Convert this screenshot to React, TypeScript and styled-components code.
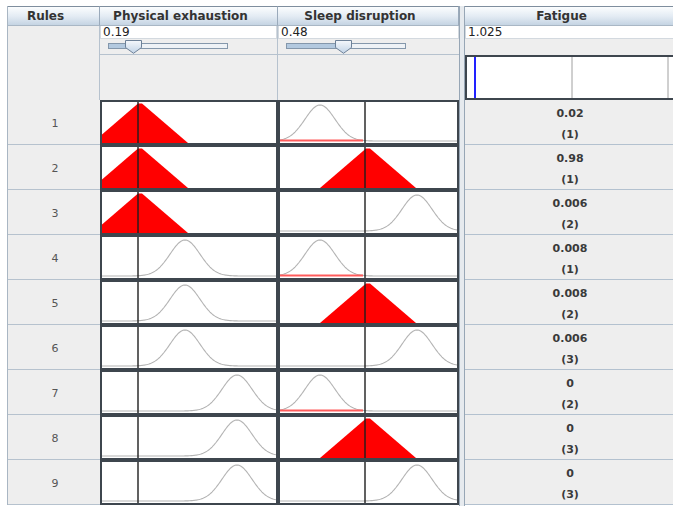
import React from "react";
import styled, { createGlobalStyle } from "styled-components";

const GlobalStyle = createGlobalStyle`
  html, body {
    margin: 0;
    padding: 0;
    background: #ffffff;
  }
  body {
    font-family: "DejaVu Sans", "Liberation Sans", sans-serif;
  }
`;

type Shape = "low" | "med" | "high";

interface Rule {
  phys: Shape;
  sleep: Shape;
  value: string;
  out: number;
}

const rules: Rule[] = [
  { phys: "low", sleep: "low", value: "0.02", out: 1 },
  { phys: "low", sleep: "med", value: "0.98", out: 1 },
  { phys: "low", sleep: "high", value: "0.006", out: 2 },
  { phys: "med", sleep: "low", value: "0.008", out: 1 },
  { phys: "med", sleep: "med", value: "0.008", out: 2 },
  { phys: "med", sleep: "high", value: "0.006", out: 3 },
  { phys: "high", sleep: "low", value: "0", out: 2 },
  { phys: "high", sleep: "med", value: "0", out: 3 },
  { phys: "high", sleep: "high", value: "0", out: 3 },
];

// centres of the membership functions, in px inside a plot cell
const physCenters: Record<Shape, number> = { low: 38, med: 83, high: 135 };
const sleepCenters: Record<Shape, number> = { low: 40, med: 88, high: 137 };

const PLOT_H = 41;

const Frame = styled.div`
  width: 673px;
  height: 506px;
  overflow: hidden;
  box-sizing: border-box;
  padding: 6px 0 0 7px;
  display: flex;
  align-items: flex-start;
`;

const InputTable = styled.div`
  display: grid;
  grid-template-columns: 92px 178px 181px;
  grid-template-rows: 20px 74px repeat(9, 45px);
  border-left: 1px solid #a9b6c3;
  background: #eeeeee;
  flex-shrink: 0;
`;

const OutputTable = styled.div`
  display: grid;
  grid-template-columns: 210px;
  grid-template-rows: 20px 74px repeat(9, 45px);
  background: #eeeeee;
  flex-shrink: 0;
`;

const Divider = styled.div`
  width: 4px;
  height: 500px;
  flex-shrink: 0;
  background: #e6eaee;
  border-left: 1px solid #97a6b5;
  border-right: 1px solid #97a6b5;
`;

const HeadCell = styled.div`
  display: flex;
  align-items: center;
  justify-content: center;
  box-sizing: border-box;
  padding-right: 16px;
  font-weight: bold;
  font-size: 12px;
  color: #333333;
  white-space: nowrap;
  background: linear-gradient(#fbfdfe, #e4ecf4 50%, #c5d4e3);
  border-top: 1px solid #7f8e9e;
  border-right: 1px solid #9aaabb;
  border-bottom: 1px solid #a9b7c5;
`;

const BlankCell = styled.div`
  border-right: 1px solid #b6c2ce;
`;

const InputCell = styled.div<{ $last?: boolean }>`
  display: flex;
  flex-direction: column;
  border-right: ${(p) => (p.$last ? "none" : "1px solid #b6c2ce")};
`;

const Field = styled.div`
  height: 13px;
  box-sizing: border-box;
  background: #ffffff;
  border: 1px solid #d3d9df;
  border-top: none;
  padding-left: 2px;
  font-size: 12px;
  line-height: 13px;
  color: #222222;
  flex-shrink: 0;
`;

const SliderRow = styled.div`
  height: 16px;
  box-sizing: border-box;
  border-bottom: 1px solid #b6c2ce;
  padding: 4px 0 0 8px;
  flex-shrink: 0;
`;

const Track = styled.div`
  position: relative;
  width: 120px;
  height: 6px;
  box-sizing: border-box;
  border: 1px solid #8497ab;
  background: #eef2f6;
`;

const TrackFill = styled.div`
  height: 100%;
  background: #b3c9df;
`;

const Thumb = styled.svg`
  position: absolute;
  top: -4px;
`;

const Band = styled.div`
  height: 16px;
  flex-shrink: 0;
`;

const OutPlot = styled.div`
  height: 45px;
  box-sizing: border-box;
  border: 2px solid #3e464e;
  background: #ffffff;
`;

const RowNo = styled.div`
  display: flex;
  align-items: center;
  justify-content: center;
  box-sizing: border-box;
  padding: 3px 0 0 2px;
  border-bottom: 1px solid #b6c2ce;
  font-size: 11px;
  color: #555555;
`;

const PlotCell = styled.div`
  box-sizing: border-box;
  border: 2px solid #3e464e;
  background: #ffffff;
  overflow: hidden;
`;

const ResultCell = styled.div`
  display: flex;
  flex-direction: column;
  align-items: center;
  justify-content: center;
  box-sizing: border-box;
  padding-top: 3px;
  border-bottom: 1px solid #b3c1cf;
  font-weight: bold;
  font-size: 11px;
  line-height: 21px;
  color: #3a3a3a;
`;

const gaussPath = (center: number, width: number) => {
  const top = 3;
  const base = 39;
  const sigma = 15;
  let d = "";
  for (let x = 0; x <= width; x += 1) {
    const y = base - (base - top) * Math.exp(-((x - center) ** 2) / (2 * sigma * sigma));
    d += `${x === 0 ? "M" : "L"}${x} ${y.toFixed(2)} `;
  }
  return d;
};

interface PlotProps {
  width: number;
  center: number;
  marker: number;
  filled?: boolean;
  cut?: boolean;
}

const MfPlot = ({ width, center, marker, filled, cut }: PlotProps) => (
  <svg width={width} height={PLOT_H} style={{ display: "block" }}>
    {filled ? (
      <polygon
        points={`${center - 48},${PLOT_H} ${center - 2},1.5 ${center + 2},1.5 ${center + 48},${PLOT_H}`}
        fill="#ff0000"
      />
    ) : (
      <path d={gaussPath(center, width)} fill="none" stroke="#b4b4b4" strokeWidth={1.1} />
    )}
    {cut && <rect x={0} y={37.5} width={center + 43} height={2} fill="#ff5c5c" />}
    <line x1={marker} y1={0} x2={marker} y2={PLOT_H} stroke="#1e1e1e" strokeWidth={1.4} />
  </svg>
);

const Slider = ({ value }: { value: number }) => {
  const pos = 4 + value * 112;
  return (
    <SliderRow>
      <Track>
        <TrackFill style={{ width: pos }} />
        <Thumb width="17" height="14" viewBox="0 0 17 14" style={{ left: pos - 9.5 }}>
          <defs>
            <linearGradient id="thumbFill" x1="0" y1="0" x2="0" y2="1">
              <stop offset="0" stopColor="#f5f8fc" />
              <stop offset="1" stopColor="#c1d3e6" />
            </linearGradient>
          </defs>
          <path d="M0.5 0.5 H16.5 V7.5 L8.5 13.3 L0.5 7.5 Z" fill="url(#thumbFill)" stroke="#6d8198" />
        </Thumb>
      </Track>
    </SliderRow>
  );
};

export default function App() {
  return (
    <>
      <GlobalStyle />
      <Frame>
        <InputTable>
          <HeadCell>Rules</HeadCell>
          <HeadCell>Physical exhaustion</HeadCell>
          <HeadCell>Sleep disruption</HeadCell>

          <BlankCell />
          <InputCell>
            <Field>0.19</Field>
            <Slider value={0.19} />
          </InputCell>
          <InputCell $last>
            <Field>0.48</Field>
            <Slider value={0.48} />
          </InputCell>

          {rules.map((r, i) => (
            <React.Fragment key={i}>
              <RowNo>{i + 1}</RowNo>
              <PlotCell>
                <MfPlot width={174} center={physCenters[r.phys]} marker={36} filled={r.phys === "low"} />
              </PlotCell>
              <PlotCell>
                <MfPlot
                  width={177}
                  center={sleepCenters[r.sleep]}
                  marker={85}
                  filled={r.sleep === "med"}
                  cut={r.sleep === "low"}
                />
              </PlotCell>
            </React.Fragment>
          ))}
        </InputTable>

        <Divider />

        <OutputTable>
          <HeadCell>Fatigue</HeadCell>
          <InputCell $last>
            <Field>1.025</Field>
            <Band />
            <OutPlot>
              <svg width={206} height={PLOT_H} style={{ display: "block" }}>
                <line x1={8} y1={0} x2={8} y2={PLOT_H} stroke="#2222ff" strokeWidth={2} />
                <line x1={105} y1={0} x2={105} y2={PLOT_H} stroke="#a0a0a0" strokeWidth={1} />
                <line x1={201} y1={0} x2={201} y2={PLOT_H} stroke="#a0a0a0" strokeWidth={1} />
              </svg>
            </OutPlot>
          </InputCell>
          {rules.map((r, i) => (
            <ResultCell key={i}>
              <span>{r.value}</span>
              <span>({r.out})</span>
            </ResultCell>
          ))}
        </OutputTable>
      </Frame>
    </>
  );
}
